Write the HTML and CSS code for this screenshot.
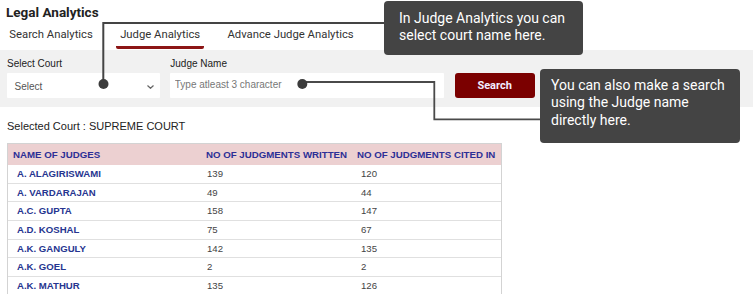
FILE: index.html
```html
<!DOCTYPE html>
<html lang="en">
<head>
  <meta charset="UTF-8">
  <title>Legal Analytics</title>
  <link rel="stylesheet" href="styles.css">
</head>
<body>

  <div class="page">
    <h1 class="title">Legal Analytics</h1>

    <nav class="tabs">
      <a class="tab">Search Analytics</a>
      <a class="tab active">Judge Analytics</a>
      <a class="tab">Advance Judge Analytics</a>
    </nav>

    <div class="filters">
      <div class="field court">
        <label>Select Court</label>
        <div class="select">
          <span>Select</span>
          <svg class="chevron" width="7" height="4" viewBox="0 0 7 4"><path d="M0.5 0.5 L3.5 3.3 L6.5 0.5" fill="none" stroke="#666" stroke-width="1.2"/></svg>
        </div>
      </div>
      <div class="field judge">
        <label>Judge Name</label>
        <input type="text" placeholder="Type atleast 3 character">
      </div>
      <button class="search-btn">Search</button>
    </div>

    <p class="selected">Selected Court : SUPREME COURT</p>

    <table class="judges">
      <thead>
        <tr>
          <th class="c-name">NAME OF JUDGES</th>
          <th class="c-written">NO OF JUDGMENTS WRITTEN</th>
          <th class="c-cited">NO OF JUDGMENTS CITED IN</th>
        </tr>
      </thead>
      <tbody>
        <tr><td>A. ALAGIRISWAMI</td><td>139</td><td>120</td></tr>
        <tr><td>A. VARDARAJAN</td><td>49</td><td>44</td></tr>
        <tr><td>A.C. GUPTA</td><td>158</td><td>147</td></tr>
        <tr><td>A.D. KOSHAL</td><td>75</td><td>67</td></tr>
        <tr><td>A.K. GANGULY</td><td>142</td><td>135</td></tr>
        <tr><td>A.K. GOEL</td><td>2</td><td>2</td></tr>
        <tr><td>A.K. MATHUR</td><td>135</td><td>126</td></tr>
      </tbody>
    </table>

    <!-- guide lines from the help bubbles to the fields -->
    <svg class="guides" width="753" height="294" viewBox="0 0 753 294">
      <polyline points="384,23 103.3,23 103.3,84" fill="none" stroke="#444" stroke-width="2"/>
      <circle cx="103.5" cy="84" r="5" fill="#3b3b3b"/>
      <polyline points="302,82 434.3,82 434.3,119.3 540,119.3" fill="none" stroke="#4a4a4a" stroke-width="1.8"/>
      <circle cx="302.3" cy="84" r="5" fill="#3b3b3b"/>
    </svg>

    <div class="tip tip-court">In Judge Analytics you can<br>select court name here.</div>
    <div class="tip tip-judge">You can also make a search<br>using the Judge name<br>directly here.</div>
  </div>

</body>
</html>
```

FILE: styles.css
```css
body {
  margin: 0;
  background: #fff;
  font-family: "Liberation Sans", Arial, sans-serif;
  color: #222;
}
.page {
  position: relative;
  width: 753px;
  height: 294px;
  overflow: hidden;
}
.title {
  margin: 0;
  padding: 4px 6px 0;
  font-family: Roboto, sans-serif;
  font-size: 13.5px;
  line-height: 17px;
  font-weight: bold;
  color: #222;
}
/* tabs */
.tabs {
  display: flex;
  gap: 19.3px;
  margin-top: 7px;
  padding-left: 5.3px;
}
.tab {
  display: block;
  padding: 0 4px 7px;
  font-family: Roboto, sans-serif;
  font-size: 11.3px;
  line-height: 14px;
  color: #333;
  cursor: pointer;
}
.tab.active {
  padding-bottom: 4px;
  border-bottom: 3px solid #8c1515;
  border-radius: 0 0 2px 2px;
}
/* filter band */
.filters {
  display: flex;
  align-items: flex-end;
  gap: 10.3px;
  margin-top: 1px;
  padding: 8px 7px 9px;
  background: #f1f1f1;
}
.field label {
  display: block;
  margin-bottom: 2.5px;
  font-size: 10px;
  line-height: 12px;
  color: #222;
}
.select {
  display: flex;
  align-items: center;
  justify-content: space-between;
  box-sizing: border-box;
  width: 153px;
  height: 25px;
  padding: 2px 6.5px 0 7.5px;
  background: #fff;
  border-radius: 1px;
  font-size: 10px;
  color: #555;
}
.chevron {
  margin-top: 1px;
}
.judge input {
  display: block;
  box-sizing: border-box;
  width: 274px;
  height: 25px;
  margin: 0;
  padding: 0 0 1px 4.5px;
  border: none;
  border-radius: 1px;
  background: #fff;
  font-family: "Liberation Sans", Arial, sans-serif;
  font-size: 10px;
  outline: none;
}
.judge input::placeholder {
  color: #777;
}
.search-btn {
  width: 80px;
  height: 25px;
  border: none;
  border-radius: 3px;
  background: #7b0000;
  color: #f1ecff;
  font-family: Roboto, sans-serif;
  font-size: 11px;
  font-weight: bold;
  cursor: pointer;
}
.selected {
  margin: 13px 0 0 7px;
  font-size: 11px;
  line-height: 13px;
  color: #222;
}
/* table */
.judges {
  margin: 10px 0 0 7px;
  border-collapse: separate;
  border-spacing: 0;
  border: 1px solid #d3d3d3;
  table-layout: fixed;
  width: 495px;
}
.judges th {
  box-sizing: border-box;
  padding: 0 0 0 5px;
  background: #ecd0d1;
  color: #2d2f96;
  font-size: 9.7px;
  line-height: 21.7px;
  text-align: left;
  font-weight: bold;
  white-space: nowrap;
}
.c-name { width: 193px; }
.c-written { width: 151px; }
.c-cited { width: 149px; }
.judges td {
  padding: 0 0 0 6px;
  font-size: 9.6px;
  line-height: 17.6px;
  color: #444;
  border-bottom: 1px solid #e0e0e0;
  white-space: nowrap;
}
.judges td:first-child {
  padding-left: 9px;
  color: #263590;
  font-weight: bold;
}
.judges td:nth-child(3) {
  padding-left: 9px;
}
/* help bubbles */
.guides {
  position: absolute;
  top: 0;
  left: 0;
  pointer-events: none;
}
.tip {
  position: absolute;
  box-sizing: border-box;
  background: #444;
  color: #fff;
  border-radius: 4px;
  font-family: Roboto, sans-serif;
  font-size: 14px;
  line-height: 17.4px;
}
.tip-court {
  left: 384px;
  top: 1px;
  width: 199px;
  height: 54px;
  padding: 8.8px 10px 0 15px;
}
.tip-judge {
  left: 540px;
  top: 69px;
  width: 200px;
  height: 74px;
  padding: 8px 10px 0 11px;
}
```
